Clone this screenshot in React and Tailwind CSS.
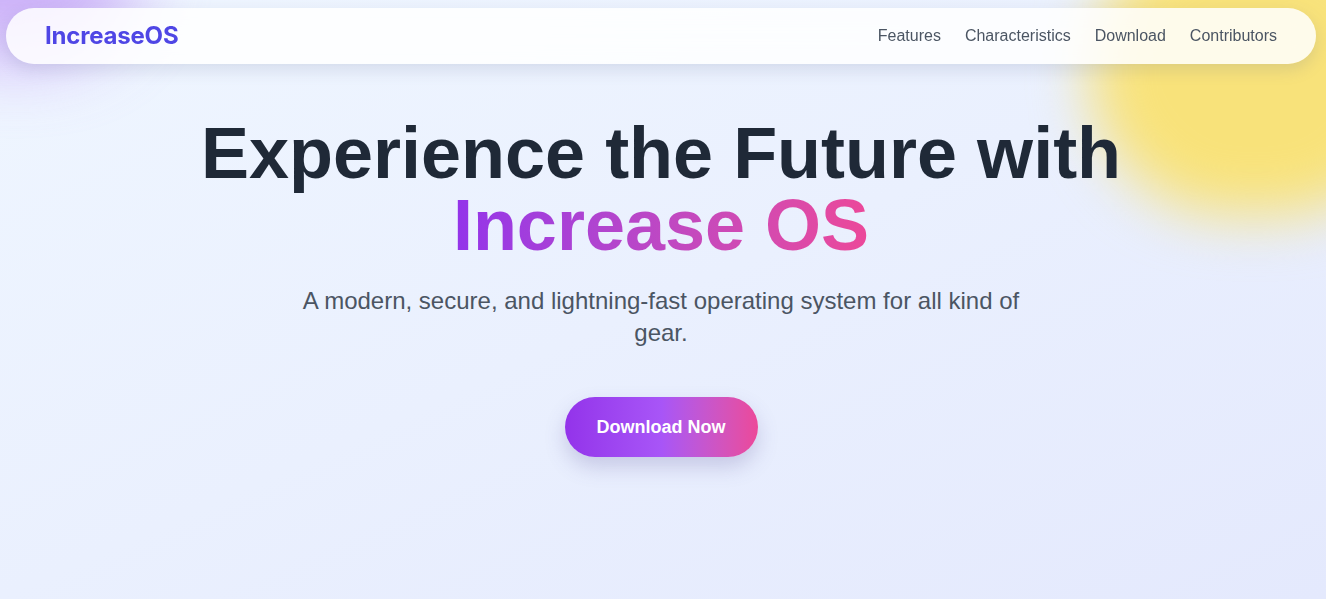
export default function App() {
  const links = ['Features', 'Characteristics', 'Download', 'Contributors'];

  return (
    <div className="relative min-h-[599px] overflow-hidden bg-gradient-to-br from-[#eff6ff] via-[#eaf0fe] to-[#e4e9fd] font-['Liberation_Sans',Arial,sans-serif]">
      {/* background blobs */}
      <div className="pointer-events-none absolute -left-[110px] -top-[150px] h-[210px] w-[250px] rounded-full bg-[#c4a0f7] opacity-80 blur-[36px]" />
      <div className="pointer-events-none absolute -top-[70px] left-[1090px] h-[285px] w-[330px] rounded-full bg-[#f8e27a] blur-[28px]" />

      <div className="relative pl-[6px] pr-[10px] pt-[8px]">
        <nav className="flex h-[56px] items-center justify-between rounded-full bg-white/85 pl-[39px] pr-[39px] shadow-[0_6px_16px_rgba(100,110,150,0.18)] backdrop-blur-md">
          <span className="font-['Inter',sans-serif] text-[24px] font-bold tracking-[-0.2px] text-[#4f46e5]">IncreaseOS</span>
          <div className="flex items-center gap-[24px] text-[16px] text-[#4b5563]">
            {links.map(l => (
              <a key={l} href="#" className="hover:text-[#4f46e5]">{l}</a>
            ))}
          </div>
        </nav>

        <section className="flex flex-col items-center pt-[53px] text-center">
          <h1 className="text-[72px] font-bold leading-none text-[#1f2937]">
            Experience the Future with
            <br />
            <span className="bg-gradient-to-r from-[#9333ea] to-[#ec4899] bg-clip-text text-transparent">Increase OS</span>
          </h1>
          <p className="mt-[24px] max-w-3xl text-2xl text-[#4b5563]">
            A modern, secure, and lightning-fast operating system for all kind of gear.
          </p>
          <button className="mt-[48px] rounded-full bg-gradient-to-r from-[#9333ea] via-[#a855f7] to-[#ec4899] px-8 py-4 text-lg font-bold text-white shadow-[0_10px_20px_rgba(100,90,160,0.25)]">
            Download Now
          </button>
        </section>
      </div>
    </div>
  );
}
